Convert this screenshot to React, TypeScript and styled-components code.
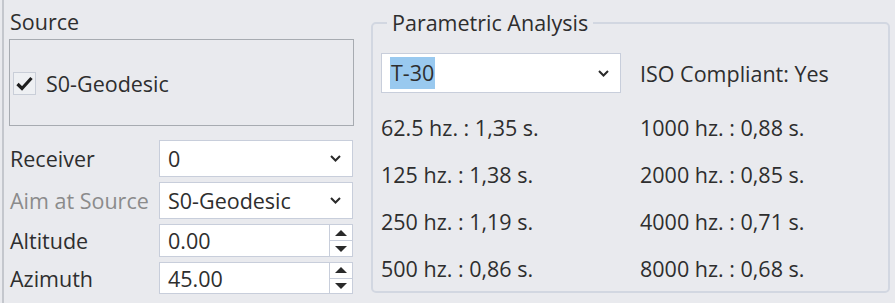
import React from "react";
import styled, { createGlobalStyle } from "styled-components";

const GlobalStyle = createGlobalStyle`
  html, body {
    margin: 0;
    padding: 0;
    background: #e9eaee;
  }
  body {
    font-family: "Open Sans", "Noto Sans", sans-serif;
    font-size: 21.5px;
    color: #2e2e2e;
  }
`;

const Page = styled.div`
  width: 895px;
  height: 303px;
  display: flex;
  box-sizing: border-box;
  padding-left: 2px;
  overflow: hidden;
`;

const LeftColumn = styled.div`
  width: 352px;
  border-left: 2px solid #c4c7cd;
  padding: 6px 0 0 5px;
  display: flex;
  flex-direction: column;
`;

const SectionTitle = styled.div`
  height: 31px;
  line-height: 31px;
  padding-left: 1px;
`;

const SourceBox = styled.div`
  margin-top: 2px;
  width: 345px;
  height: 87px;
  box-sizing: border-box;
  border: 1px solid #a7abb1;
  display: flex;
  align-items: center;
  padding: 2px 0 0 3px;
  gap: 10px;
`;

const CheckBox = styled.span`
  width: 23px;
  height: 23px;
  box-sizing: border-box;
  border: 1px solid #c9ced8;
  background: #eef0f3;
  display: flex;
  align-items: center;
  justify-content: center;
`;

const FormGrid = styled.div`
  margin-top: 14px;
  display: grid;
  grid-template-columns: 149px 194px;
  grid-template-rows: 37px 37px 33px 32px;
  row-gap: 5px;
  padding-left: 1px;
`;

const Label = styled.div<{ $muted?: boolean }>`
  display: flex;
  align-items: center;
  color: ${(p) => (p.$muted ? "#8b8b8b" : "#2e2e2e")};
  white-space: nowrap;
`;

const Combo = styled.div<{ $width?: number; $height?: number }>`
  box-sizing: border-box;
  border: 1px solid #c8cedb;
  background: #ffffff;
  display: flex;
  align-items: center;
  justify-content: space-between;
  padding: 0 11px 0 8px;
  ${(p) => (p.$width ? `width: ${p.$width}px;` : "")}
  ${(p) => (p.$height ? `height: ${p.$height}px;` : "")}
`;

const Spin = styled.div`
  box-sizing: border-box;
  border: 1px solid #c8cedb;
  background: #ffffff;
  display: flex;
`;

const SpinText = styled.div`
  flex: 1;
  display: flex;
  align-items: center;
  padding-left: 8px;
  border-right: 1px solid #c8cedb;
`;

const SpinButtons = styled.div`
  width: 22px;
  display: flex;
  flex-direction: column;
`;

const SpinButton = styled.div<{ $down?: boolean }>`
  flex: 1;
  display: flex;
  align-items: center;
  justify-content: center;
  border-top: ${(p) => (p.$down ? "1px solid #c8cedb" : "none")};
`;

const Triangle = styled.span<{ $down?: boolean }>`
  width: 0;
  height: 0;
  border-left: 6px solid transparent;
  border-right: 6px solid transparent;
  ${(p) =>
    p.$down
      ? "border-top: 6px solid #2a2a2a;"
      : "border-bottom: 6px solid #2a2a2a;"}
`;

const RightColumn = styled.div`
  flex: 1;
  padding: 9px 5px 0 10px;
`;

const Group = styled.fieldset`
  margin: 0;
  box-sizing: border-box;
  height: 284px;
  border: 2px solid #d2d7e1;
  border-radius: 5px;
  padding: 0 8px;
`;

const Legend = styled.legend`
  padding: 0 5px;
  margin-left: 6px;
  line-height: 28px;
`;

const TopRow = styled.div`
  margin-top: 16px;
  height: 40px;
  display: flex;
  align-items: center;
  gap: 19px;
`;

const ResultRows = styled.div`
  display: grid;
  grid-template-columns: 259px 1fr;
  grid-auto-rows: 47px;
  margin-top: 11px;
`;

const Cell = styled.div`
  display: flex;
  align-items: center;
  white-space: nowrap;
`;

const Selected = styled.span`
  background: #99c9ef;
  padding: 0 1px;
  line-height: 32px;
`;

const Chevron: React.FC = () => (
  <svg width="11" height="7" viewBox="0 0 11 7">
    <path
      d="M1 1 L5.5 5.5 L10 1"
      fill="none"
      stroke="#2a2a2a"
      strokeWidth="2"
    />
  </svg>
);

const Check: React.FC = () => (
  <svg width="17" height="15" viewBox="0 0 17 15">
    <path
      d="M1.5 8 L6 12.5 L15.5 2"
      fill="none"
      stroke="#1e1e1e"
      strokeWidth="3.2"
    />
  </svg>
);

const SpinBox: React.FC<{ value: string }> = ({ value }) => (
  <Spin>
    <SpinText>{value}</SpinText>
    <SpinButtons>
      <SpinButton>
        <Triangle />
      </SpinButton>
      <SpinButton $down>
        <Triangle $down />
      </SpinButton>
    </SpinButtons>
  </Spin>
);

const results: [string, string][] = [
  ["62.5 hz. : 1,35 s.", "1000 hz. : 0,88 s."],
  ["125 hz. : 1,38 s.", "2000 hz. : 0,85 s."],
  ["250 hz. : 1,19 s.", "4000 hz. : 0,71 s."],
  ["500 hz. : 0,86 s.", "8000 hz. : 0,68 s."],
];

const App: React.FC = () => {
  return (
    <>
      <GlobalStyle />
      <Page>
        <LeftColumn>
          <SectionTitle>Source</SectionTitle>
          <SourceBox>
            <CheckBox>
              <Check />
            </CheckBox>
            <span>S0-Geodesic</span>
          </SourceBox>
          <FormGrid>
            <Label>Receiver</Label>
            <Combo>
              <span>0</span>
              <Chevron />
            </Combo>
            <Label $muted>Aim at Source</Label>
            <Combo>
              <span>S0-Geodesic</span>
              <Chevron />
            </Combo>
            <Label>Altitude</Label>
            <SpinBox value="0.00" />
            <Label>Azimuth</Label>
            <SpinBox value="45.00" />
          </FormGrid>
        </LeftColumn>
        <RightColumn>
          <Group>
            <Legend>Parametric Analysis</Legend>
            <TopRow>
              <Combo $width={240} $height={40}>
                <Selected>T-30</Selected>
                <Chevron />
              </Combo>
              <Cell>ISO Compliant: Yes</Cell>
            </TopRow>
            <ResultRows>
              {results.map(([a, b]) => (
                <React.Fragment key={a}>
                  <Cell>{a}</Cell>
                  <Cell>{b}</Cell>
                </React.Fragment>
              ))}
            </ResultRows>
          </Group>
        </RightColumn>
      </Page>
    </>
  );
};

export default App;
